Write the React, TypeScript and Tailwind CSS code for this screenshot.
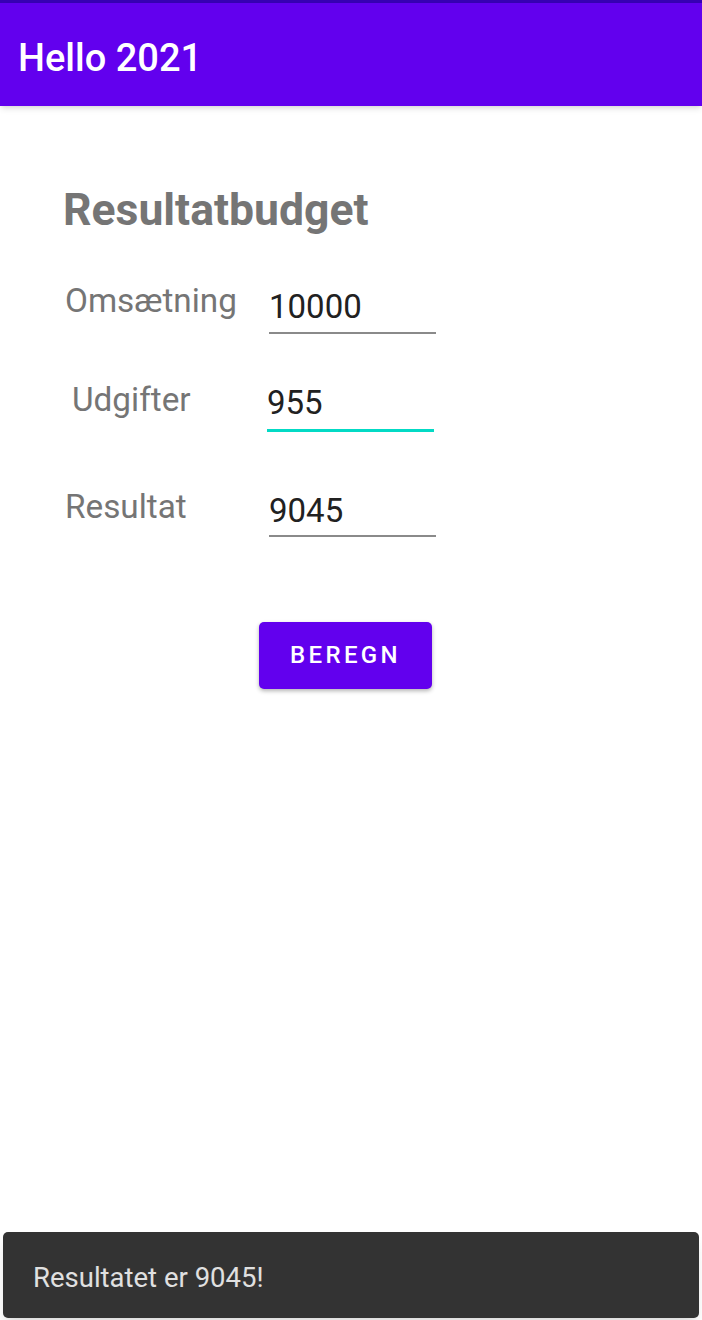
import React from 'react'

const font = { fontFamily: 'Roboto, "Noto Sans", sans-serif' }

function Field({
  value,
  line,
  className,
}: {
  value: string
  line: string
  className: string
}) {
  return (
    <div className={`w-[167px] ${line} ${className}`}>
      <div className="text-[33px] leading-none text-[#212121]">{value}</div>
    </div>
  )
}

export default function App() {
  return (
    <div className="flex h-[1320px] flex-col bg-white" style={font}>
      <div className="h-[3px] bg-[#3700b3]" />
      <header className="relative z-10 h-[103px] bg-[#6200ee] pl-[18px] pt-[36px] shadow-md">
        <h1 className="text-[38px] font-medium leading-none text-white">Hello 2021</h1>
      </header>

      <main className="flex flex-col pl-[63px]">
        <h2 className="mt-[82px] text-[44.5px] font-bold leading-none text-[#757575]">Resultatbudget</h2>

        {/* Omsætning */}
        <div className="mt-[51px] flex items-start">
          <span className="w-[206px] pl-[2px] text-[33.3px] leading-none text-[#757575]">Omsætning</span>
          <Field value="10000" line="border-b-2 border-[#8a8a8a] pb-[9px]" className="mt-[6px]" />
        </div>

        {/* Udgifter */}
        <div className="mt-[49px] flex items-start">
          <span className="w-[204px] pl-[9px] text-[33.3px] leading-none text-[#757575]">Udgifter</span>
          <Field value="955" line="border-b-[3px] border-[#03dac5] pb-[10px]" className="mt-[3px]" />
        </div>

        {/* Resultat */}
        <div className="mt-[58px] flex items-start">
          <span className="w-[206px] pl-[2px] text-[33.3px] leading-none text-[#757575]">Resultat</span>
          <Field value="9045" line="border-b-2 border-[#8a8a8a] pb-[8px]" className="mt-[4px]" />
        </div>

        <button
          type="button"
          className="ml-[196px] mt-[85px] h-[67px] w-[173px] rounded-[5px] bg-[#6200ee] text-[24px] font-medium tracking-[0.14em] text-white shadow-[0_2px_4px_rgba(0,0,0,0.3)]"
        >
          BEREGN
        </button>
      </main>

      <div className="mx-[3px] mb-[2px] mt-auto h-[86px] rounded-[5px] bg-[#333333] pl-[30px] pt-[32px] shadow-lg">
        <span className="text-[27.5px] leading-none text-[#e0e0e0]">Resultatet er 9045!</span>
      </div>
    </div>
  )
}
